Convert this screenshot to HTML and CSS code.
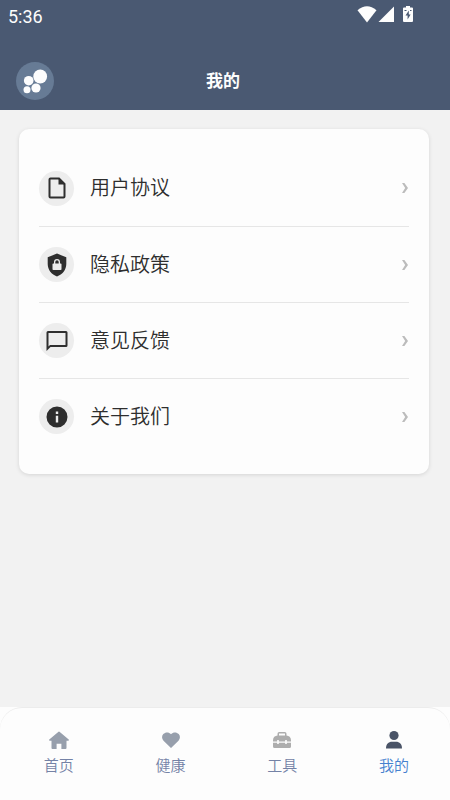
FILE: index.html
```html
<!DOCTYPE html>
<html lang="zh-CN">
<head>
<meta charset="utf-8">
<meta name="viewport" content="width=device-width, initial-scale=1">
<title>我的</title>
<link rel="stylesheet" href="styles.css">
</head>
<body>
<div class="app">
  <header class="header">
    <div class="status">
      <time class="clock">5:36</time>
      <div class="indicators">
        <svg width="20" height="17" viewBox="0 0 20 17"><path d="M0.5 4.2Q10-3.6 19.5 4.2L10 16.5Z"/></svg>
        <svg width="16" height="17" viewBox="0 0 16 17"><path d="M16 0.5V16H0.5Z"/></svg>
        <svg class="battery" width="10" height="17" viewBox="0 0 10 17"><path d="M3 0h4v1.500h2a1 1 0 0 1 1 1V15a1 1 0 0 1-1 1H1a1 1 0 0 1-1-1V2.500a1 1 0 0 1 1-1h2z"/><path class="cut" d="M5.800 4.500 2.500 9.500H4.600V13.500L7.600 8.500H5.800ZM1.500 4h2v1h-2zM7 4h1.500v1H7z"/></svg>
      </div>
    </div>
    <div class="titlebar">
      <button class="brand" type="button" aria-label="菜单">
        <svg width="38" height="38" viewBox="0 0 38 38"><circle cx="24.200" cy="14.500" r="6.900"/><circle cx="12.700" cy="18.700" r="4.800"/><circle cx="20" cy="26" r="4.600"/><circle cx="11" cy="27.800" r="3.500"/></svg>
      </button>
      <h1 class="title">我的</h1>
    </div>
  </header>

  <main class="main">
    <ul class="card">
      <li class="item"><a class="row" href="#agreement">
        <span class="badge"><svg width="24" height="24" viewBox="0 0 24 24"><path class="line" d="M5.500 2.500H14L19.500 8V20.500a1 1 0 0 1-1 1H5.500a1 1 0 0 1-1-1V3.500a1 1 0 0 1 1-1Z"/><path d="M13.500 2.500V8.500H19.500Z"/></svg></span>
        <span class="label">用户协议</span>
        <svg class="chevron" width="8" height="12" viewBox="0 0 8 12"><path d="M1 1H3.400L7 6 3.400 11H1L4.200 6Z"/></svg>
      </a></li>
      <li class="item"><a class="row" href="#privacy">
        <span class="badge"><svg width="24" height="24" viewBox="0 0 24 24"><path fill-rule="evenodd" d="M12 .6 21.300 4.200V11C21.300 16.800 17.500 21.500 12 23.400 6.500 21.500 2.700 16.800 2.700 11V4.200ZM12 6a3 3 0 0 0-3 3v1.500H8.300a.8.8 0 0 0-.8.8v4.900a.8.8 0 0 0 .8.8h7.400a.8.8 0 0 0 .8-.8v-4.900a.8.8 0 0 0-.8-.8H15V9a3 3 0 0 0-3-3Zm0 1.300A1.700 1.700 0 0 1 13.700 9v1.500h-3.400V9A1.700 1.700 0 0 1 12 7.300Z"/></svg></span>
        <span class="label">隐私政策</span>
        <svg class="chevron" width="8" height="12" viewBox="0 0 8 12"><path d="M1 1H3.400L7 6 3.400 11H1L4.200 6Z"/></svg>
      </a></li>
      <li class="item"><a class="row" href="#feedback">
        <span class="badge"><svg width="24" height="24" viewBox="0 0 24 24"><path d="M21 2H3a1.500 1.500 0 0 0-1.500 1.500V22l4-4H21a1.500 1.500 0 0 0 1.500-1.500v-13A1.500 1.500 0 0 0 21 2Zm-.5 14H5L3.500 17.500V4h17Z"/></svg></span>
        <span class="label">意见反馈</span>
        <svg class="chevron" width="8" height="12" viewBox="0 0 8 12"><path d="M1 1H3.400L7 6 3.400 11H1L4.200 6Z"/></svg>
      </a></li>
      <li class="item"><a class="row" href="#about">
        <span class="badge"><svg width="24" height="24" viewBox="0 0 24 24"><path fill-rule="evenodd" d="M12 1.500a10.500 10.500 0 1 0 0 21 10.500 10.500 0 0 0 0-21ZM10.800 6.500h2.400V9h-2.400Zm0 4.200h2.400v6.800h-2.400Z"/></svg></span>
        <span class="label">关于我们</span>
        <svg class="chevron" width="8" height="12" viewBox="0 0 8 12"><path d="M1 1H3.400L7 6 3.400 11H1L4.200 6Z"/></svg>
      </a></li>
    </ul>
  </main>

  <footer class="footer">
    <nav class="tabs">
      <a class="tab" href="#home">
        <svg class="slate" width="20" height="20" viewBox="0 0 20 20"><path d="M9.200 1.900a1.200 1.200 0 0 1 1.600 0L19.700 9.500c.5.600.2 1.300-.5 1.300H17.500V18a1 1 0 0 1-1 1H12.400V13.700H7.600V19H3.500a1 1 0 0 1-1-1V10.800H.8C.1 10.800-.2 10.100.3 9.500Z"/></svg>
        <span>首页</span>
      </a>
      <a class="tab" href="#health">
        <svg class="slate" width="20" height="20" viewBox="0 0 20 20"><path d="M10 18 2.500 10.700C.6 8.700.6 5.700 2.300 4 4.300 1.900 7.900 1.800 10 4.200 12.100 1.800 15.700 1.900 17.700 4c1.700 1.700 1.700 4.700-.2 6.700Z"/></svg>
        <span>健康</span>
      </a>
      <a class="tab" href="#tools">
        <svg class="gray" width="20" height="20" viewBox="0 0 20 20"><path fill-rule="evenodd" d="M5.500 5.500V3.700a1.700 1.700 0 0 1 1.700-1.700h5.600a1.700 1.700 0 0 1 1.700 1.700V5.500C17 5.600 19 7.500 19 10.200V11.500H14.800V10h-1.600v1.500H6.800V10H5.200v1.500H1V10.200C1 7.500 3 5.600 5.500 5.500ZM7 5.500h6V3.500H7ZM1 12.700H5.200V14h1.600V12.700h6.400V14h1.600V12.700H19V16.500a1.500 1.500 0 0 1-1.500 1.500h-15A1.500 1.500 0 0 1 1 16.500Z"/></svg>
        <span>工具</span>
      </a>
      <a class="tab active" href="#me" aria-current="page">
        <svg class="dark" width="20" height="20" viewBox="0 0 20 20"><circle cx="10" cy="5.500" r="4.600"/><path d="M2 18.500C2 14 4.500 11.800 8 11.800h4c3.500 0 6 2.200 6 6.700Z"/></svg>
        <span>我的</span>
      </a>
    </nav>
  </footer>
</div>
</body>
</html>
```
FILE: styles.css
```css
* {
  box-sizing: border-box;
}

body {
  margin: 0;
  font-family: Roboto, "Noto Sans CJK SC", sans-serif;
  background: #f2f2f2;
}

a {
  color: inherit;
  text-decoration: none;
}

svg {
  display: block;
  fill: currentColor;
}

.app {
  display: flex;
  flex-direction: column;
  min-height: 100vh;
}

.header {
  color: #fdfdfd;
  background: #4a5972;
}

.status {
  display: flex;
  align-items: center;
  justify-content: space-between;
  height: 34px;
  padding: 0 37px 0 8px;
}

.clock {
  font-size: 18px;
  font-weight: 400;
  line-height: 32px;
}

.indicators {
  display: flex;
  gap: 1px;
  padding-bottom: 6px;
}

.battery {
  margin-left: 8px;
}

.cut {
  fill: #4a5972;
}

.titlebar {
  display: grid;
  grid-template-columns: 1fr auto 1fr;
  align-items: center;
  padding: 28px 20px 10px 16px;
}

.brand {
  width: 38px;
  height: 38px;
  padding: 0;
  border: 0;
  border-radius: 50%;
  color: #fdfdfd;
  background: #677b95;
}

.title {
  margin: 0;
  font-size: 17px;
  font-weight: 700;
  line-height: 24px;
}

.main {
  flex: 1;
  padding: 19px 21px 20px 19px;
}

.card {
  margin: 0;
  padding: 21px 20px 20px;
  list-style: none;
  background: #fdfdfd;
  border-radius: 10px;
  box-shadow: 0 1px 4px rgba(0, 0, 0, 0.12);
}

.item {
  height: 76px;
}

.item + .item {
  border-top: 1px solid #e6e6e6;
}

.row {
  display: flex;
  align-items: center;
  height: 100%;
  color: #2e2e2e;
}

.badge {
  display: grid;
  place-items: center;
  width: 35px;
  height: 35px;
  margin-right: 16px;
  border-radius: 50%;
  background: #ededed;
}

.badge svg {
  width: 24px;
  height: 24px;
}

.line {
  fill: none;
  stroke: currentColor;
  stroke-width: 2;
}

.label {
  flex: 1;
  font-size: 20px;
  font-weight: 350;
  line-height: 28px;
}

.chevron {
  color: #bcbcbc;
}

.footer {
  background: #fdfdfd;
}

.tabs {
  display: grid;
  grid-template-columns: repeat(4, 1fr);
  padding: 22px 0 22px 3px;
  border-top: 1px solid #ececec;
  border-radius: 22px 22px 0 0;
}

.tab {
  display: flex;
  flex-direction: column;
  align-items: center;
  gap: 4px;
  color: #7482a6;
  font-size: 15px;
  font-weight: 350;
  line-height: 24px;
}

.active {
  color: #4681cf;
}

.slate {
  color: #979fac;
}

.gray {
  color: #adadad;
}

.dark {
  color: #4a5467;
}
```
